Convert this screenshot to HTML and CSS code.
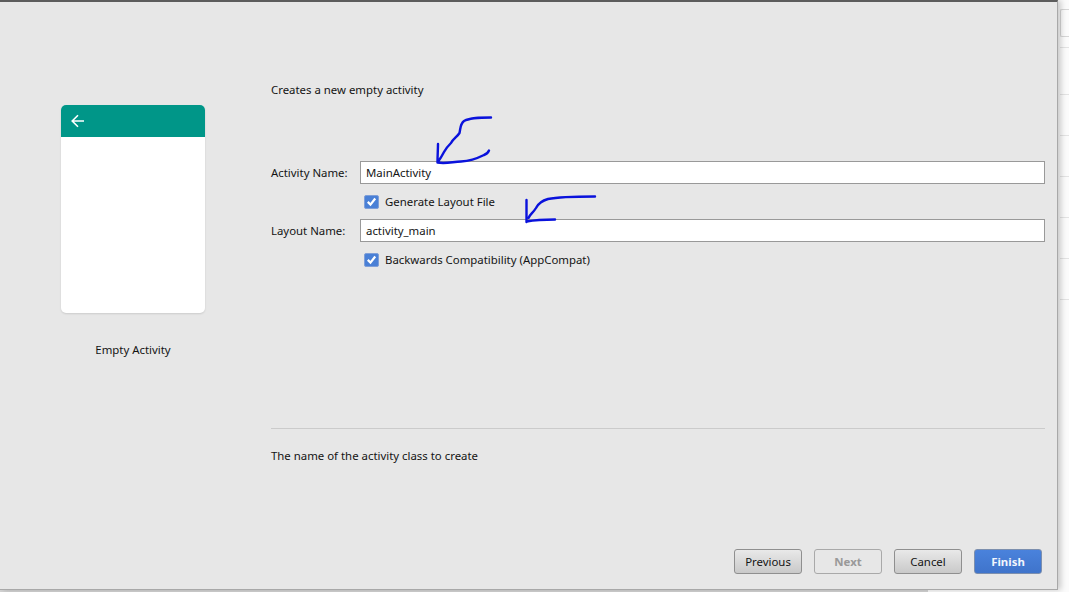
FILE: index.html
```html
<!DOCTYPE html>
<html lang="en">
<head>
<meta charset="utf-8">
<title>Create New Activity</title>
<link rel="stylesheet" href="styles.css">
</head>
<body>
<div class="screen">
  <div class="dialog">
    <div class="main">
      <aside class="preview">
        <div class="card">
          <div class="card-bar">
            <svg class="back" width="14" height="14" viewBox="0 0 14 14" aria-hidden="true"><path d="M13 7H1.6M7 1.2 1.2 7 7 12.8" fill="none" stroke="#fff" stroke-width="1.6"/></svg>
          </div>
        </div>
        <p class="caption">Empty Activity</p>
      </aside>
      <section class="config">
        <p class="intro">Creates a new empty activity</p>
        <div class="form">
          <label class="label">Activity Name:</label>
          <div class="input">MainActivity</div>
          <div class="check-row">
            <span class="check"><svg width="13" height="13" viewBox="0 0 14 14" aria-hidden="true"><path d="M3 7.4 5.9 10.300 11 3.800" fill="none" stroke="#fff" stroke-width="2.4"/></svg></span>
            <span>Generate Layout File</span>
          </div>
          <label class="label">Layout Name:</label>
          <div class="input">activity_main</div>
          <div class="check-row">
            <span class="check"><svg width="13" height="13" viewBox="0 0 14 14" aria-hidden="true"><path d="M3 7.4 5.9 10.300 11 3.800" fill="none" stroke="#fff" stroke-width="2.4"/></svg></span>
            <span>Backwards Compatibility (AppCompat)</span>
          </div>
        </div>
        <div class="divider"></div>
        <p class="hint">The name of the activity class to create</p>
      </section>
    </div>
    <footer class="buttons">
      <button class="btn">Previous</button>
      <button class="btn btn-off">Next</button>
      <button class="btn">Cancel</button>
      <button class="btn btn-primary">Finish</button>
    </footer>
    <svg class="ink" width="1057" height="300" viewBox="0 0 1057 300" aria-hidden="true">
      <path d="M491 118.500C480 118.500 470 118.500 464 122C460 125 460.500 130 459.500 134C457 138 453 140 451 144C448 147 446 149 444 153C442 157 440 160 437.500 163.500M437.500 163.500C437.500 156 438 150 438 145M437.500 163.500C445 165 452 163 461 162.500C470 162 478 159 484 156C487 155 488 154 489 151.500" transform="translate(0 -1)"/>
      <path d="M595 196.500C580 196.500 560 196.500 548 199C541 201 538 204 536 208C533 213 530 214 528.500 218M526.500 200V222M526.500 221.500C535 220 545 219.500 555 219.500"/>
    </svg>
  </div>
  <div class="backdrop">
    <div class="tab"></div>
    <div class="row row-top"></div>
    <div class="row row-wide"></div>
    <div class="row"></div>
    <div class="row"></div>
    <div class="row"></div>
    <div class="row"></div>
    <div class="row"></div>
  </div>
</div>
<div class="under"></div>
</body>
</html>
```
FILE: styles.css
```css
* { box-sizing: border-box; }
html, body { margin: 0; padding: 0; }
body {
  width: 1069px;
  height: 592px;
  overflow: hidden;
  background: #fbfbfb;
  font-family: "Noto Sans", "Open Sans", sans-serif;
  font-size: 11.4px;
  color: #141414;
}
p { margin: 0; }
.screen { display: flex; height: 590px; }
.dialog {
  position: relative;
  flex: 0 0 1058px;
  height: 590px;
  display: flex;
  flex-direction: column;
  background: #e7e7e7;
  border-top: 2px solid #5c5c5c;
  border-right: 1px solid #a8a8a8;
  border-bottom: 1px solid #a8a8a8;
  box-shadow: 3px 0 6px rgba(0, 0, 0, .2);
}
.main { flex: 1; display: flex; min-height: 0; }
.preview {
  flex: 0 0 271px;
  padding: 103px 0 0 61px;
}
.card {
  width: 144px;
  height: 208px;
  background: #fff;
  border-radius: 5px;
  overflow: hidden;
  box-shadow: 0 1px 2px rgba(0, 0, 0, .12);
}
.card-bar {
  height: 32px;
  background: #009688;
  display: flex;
  align-items: center;
  padding-left: 10px;
}
.back { display: block; }
.caption {
  width: 144px;
  margin-top: 28px;
  line-height: 18px;
  text-align: center;
}
.config {
  flex: 0 0 774px;
  padding-top: 79px;
  display: flex;
  flex-direction: column;
}
.intro { line-height: 17px; }
.form {
  margin-top: 63px;
  display: grid;
  grid-template-columns: 89px 1fr;
  align-items: center;
}
.label { line-height: 23px; }
.input {
  height: 23px;
  background: #fff;
  border: 1px solid #999;
  padding-left: 5px;
  line-height: 21px;
}
.check-row {
  grid-column: 2;
  height: 35px;
  display: flex;
  align-items: center;
  gap: 6px;
  padding-left: 4px;
}
.check {
  width: 15px;
  height: 14px;
  border-radius: 2px;
  background: #4a80d6;
  border: 1px solid #7f9fd8;
  display: flex;
  align-items: center;
  justify-content: center;
}
.check svg { flex: none; }
.divider {
  margin-top: 151px;
  border-top: 1px solid #cbcbcb;
}
.hint { margin-top: 18px; line-height: 17px; }
.buttons {
  flex: 0 0 auto;
  display: flex;
  justify-content: flex-end;
  gap: 12px;
  padding: 0 15px 15px 0;
}
.btn {
  width: 68px;
  height: 25px;
  padding: 0;
  font: inherit;
  color: #141414;
  border: 1px solid #8f8f8f;
  border-radius: 3px;
  background: linear-gradient(#e9e9e9, #c9c9c9);
}
.btn-off {
  background: #e7e7e7;
  border-color: #a9a9a9;
  color: #999;
  font-weight: 700;
}
.btn-primary {
  background: linear-gradient(#4a82dc, #3f74cb);
  border-color: #7c8fae;
  color: #f2f6fd;
  font-weight: 700;
}
.ink {
  position: absolute;
  left: 0;
  top: -2px;
  fill: none;
  stroke: #0a12dc;
  stroke-width: 2.4;
  stroke-linecap: round;
  stroke-linejoin: round;
  pointer-events: none;
}
.backdrop { flex: 1; padding-left: 2px; }
.tab {
  height: 28px;
  margin-top: 9px;
  border: 1px solid #d6d6d6;
  border-right: 0;
  border-radius: 2px 0 0 2px;
}
.row { height: 41px; border-bottom: 1px solid #e3e3e3; }
.row-top { height: 11px; }
.row-wide { height: 47px; }
.under {
  width: 928px;
  height: 2px;
  background: #d4d4d4;
}
```
